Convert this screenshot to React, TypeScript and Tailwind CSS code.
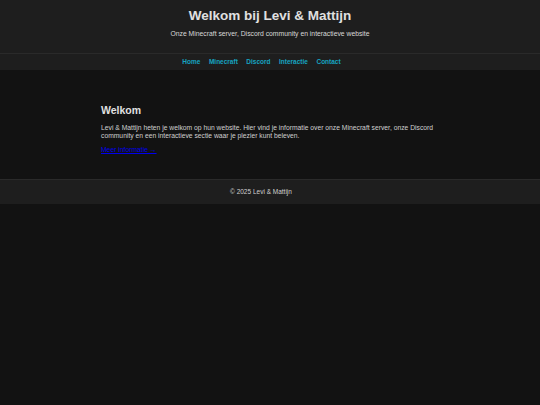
import React from 'react';

const navItems = ['Home', 'Minecraft', 'Discord', 'Interactie', 'Contact'];

const App: React.FC = () => {
  return (
    <div
      className="min-h-[405px] bg-[#121212] text-[#e0e0e0]"
      style={{ fontFamily: '"Liberation Sans", Arial, sans-serif' }}
    >
      {/* kop */}
      <header className="bg-[#1e1e1e] pt-[8px] pb-[15px] text-center">
        <h1 className="text-[13.5px] font-bold leading-[16px]">Welkom bij Levi &amp; Mattijn</h1>
        <p className="mt-[6px] text-[6.8px] leading-[8px] text-[#d8d8d8]">
          Onze Minecraft server, Discord community en interactieve website
        </p>
      </header>

      <nav className="flex h-[17px] items-center justify-center gap-[8.5px] border-t border-[#2a2a2a] bg-[#1e1e1e] pr-[17px]">
        {navItems.map((item) => (
          <a key={item} href="#" className="text-[6.5px] font-bold leading-[8px] text-[#16a4c0]">
            {item}
          </a>
        ))}
      </nav>

      {/* inhoud */}
      <main className="mx-auto w-[338px] pt-[34px] pb-[25px]">
        <h2 className="text-[10.5px] font-bold leading-[13px]">Welkom</h2>
        <p className="mt-[7px] text-[6.75px] leading-[7.5px] text-[#d0d0d0]">
          Levi &amp; Mattijn heten je welkom op hun website. Hier vind je informatie over onze Minecraft server, onze Discord
          community en een interactieve sectie waar je plezier kunt beleven.
        </p>
        <div className="mt-[7px] text-[6.75px] leading-[8px]">
          <a href="#" className="text-[#0000ee] underline">
            Meer informatie →
          </a>
        </div>
      </main>

      <footer className="flex h-[25px] items-center justify-center border-t border-[#2a2a2a] bg-[#1e1e1e] pr-[18px] text-[6.5px] leading-[8px] text-[#d0d0d0]">
        © 2025 Levi &amp; Mattijn
      </footer>
    </div>
  );
};

export default App;
